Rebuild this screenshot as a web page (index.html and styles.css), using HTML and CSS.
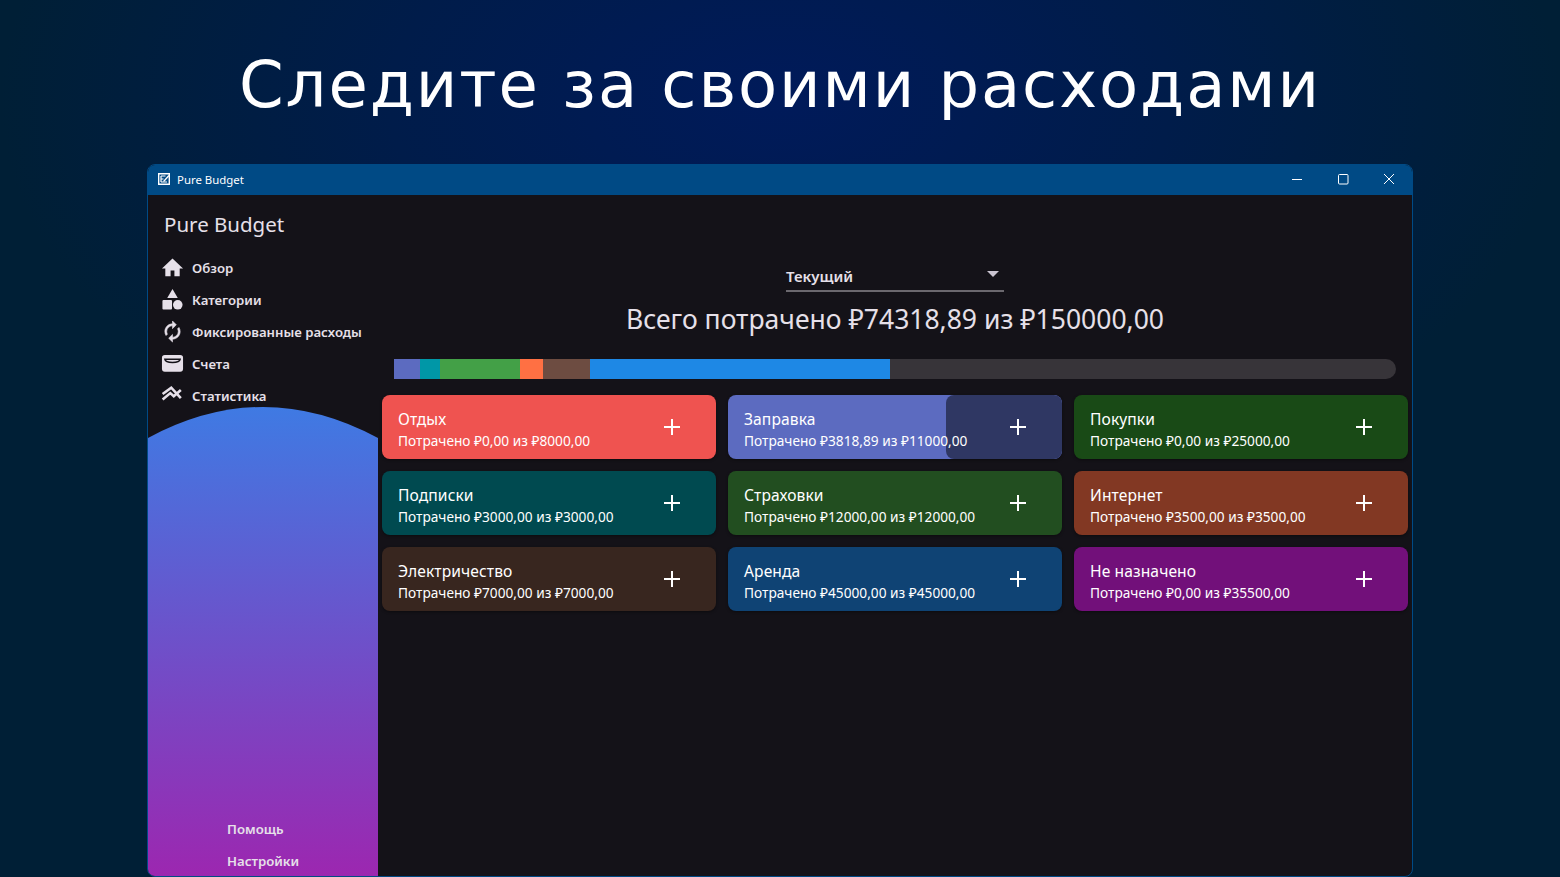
FILE: index.html
```html
<!DOCTYPE html>
<html lang="ru">

<head>
    <meta charset="UTF-8">
    <title>Pure Budget</title>
    <link rel="stylesheet" href="styles.css">
</head>

<body>
    <h1 class="promo-title">Следите за своими расходами</h1>

    <div class="window">
        <div class="titlebar">
            <svg class="app-icon" viewBox="0 0 12 12">
                <path d="M.7.7h10.600v10.600H.7z" fill="none" stroke="#fff" stroke-width="1.400" />
                <path d="M3 3h4.500M3 6h2.500M3 9h6M3 3v6" fill="none" stroke="#fff" stroke-width="1.200" />
                <path d="M5.500 7.500l5-5.500 1 1-5 5.500-1.300.3z" fill="#fff" />
            </svg>
            <span class="app-name">Pure Budget</span>
            <div class="win-controls">
                <svg class="win-btn" viewBox="0 0 46 30">
                    <path d="M18 15.500h10" stroke="#fff" fill="none" />
                </svg>
                <svg class="win-btn" viewBox="0 0 46 30">
                    <rect x="18.500" y="10.500" width="9.500" height="9.500" rx="1" stroke="#fff" fill="none" />
                </svg>
                <svg class="win-btn" viewBox="0 0 46 30">
                    <path d="M18 10l10 10M28 10l-10 10" stroke="#fff" fill="none" />
                </svg>
            </div>
        </div>

        <div class="app-body">
            <aside class="sidebar">
                <div class="brand">Pure Budget</div>
                <nav class="nav">
                    <a class="nav-item">
                        <svg class="nav-icon" viewBox="0 0 24 24">
                            <path d="M10 21v-6h4v6h5.500v-8H23L12 2.500 1 13h3.500v8z" />
                        </svg>
                        <span class="nav-label">Обзор</span>
                    </a>
                    <a class="nav-item">
                        <svg class="nav-icon" viewBox="0 0 24 24">
                            <path d="M12 1l5.500 9.500h-11z" />
                            <rect x="1.500" y="12.500" width="10" height="10" rx="1" />
                            <circle cx="17.500" cy="17.500" r="5" />
                        </svg>
                        <span class="nav-label">Категории</span>
                    </a>
                    <a class="nav-item">
                        <svg class="nav-icon nav-icon-sync" viewBox="0 0 24 24">
                            <path d="M12 6v3l4-4-4-4v3c-4.420 0-8 3.580-8 8 0 1.570.46 3.030 1.240 4.260L6.700 14.800c-.45-.83-.7-1.790-.7-2.800 0-3.310 2.690-6 6-6zm6.760 1.740L17.300 9.200c.44.84.7 1.790.7 2.800 0 3.310-2.690 6-6 6v-3l-4 4 4 4v-3c4.420 0 8-3.580 8-8 0-1.570-.46-3.030-1.240-4.260z" />
                        </svg>
                        <span class="nav-label">Фиксированные расходы</span>
                    </a>
                    <a class="nav-item">
                        <svg class="nav-icon" viewBox="0 0 24 24">
                            <rect x="1" y="3" width="22" height="17.500" rx="3" />
                            <path class="tray-line" d="M4 7.500h16c-.5 3-3.500 3.500-8 3.500s-7.500-.5-8-3.500z" />
                        </svg>
                        <span class="nav-label">Счета</span>
                    </a>
                    <a class="nav-item">
                        <svg class="nav-icon nav-icon-line" viewBox="0 0 24 24">
                            <path d="M1.700 10.500l9-6.700 10 11" />
                            <path d="M1.700 16.200l8-6.700 3.600 3.300 7.400-6.600" />
                        </svg>
                        <span class="nav-label">Статистика</span>
                    </a>
                </nav>
                <div class="wave">
                    <a class="wave-link"><span class="nav-label">Помощь</span></a>
                    <a class="wave-link"><span class="nav-label">Настройки</span></a>
                </div>
            </aside>

            <main class="content">
                <div class="period-select">
                    <span>Текущий</span>
                    <span class="caret"></span>
                </div>
                <div class="total">Всего потрачено ₽74318,89 из ₽150000,00</div>

                <div class="total-bar">
                    <div class="seg seg-indigo" style="width: 2.55%"></div>
                    <div class="seg seg-teal" style="width: 2%"></div>
                    <div class="seg seg-green" style="width: 8%"></div>
                    <div class="seg seg-orange" style="width: 2.33%"></div>
                    <div class="seg seg-brown" style="width: 4.67%"></div>
                    <div class="seg seg-blue" style="width: 30%"></div>
                </div>

                <div class="cards">
                    <div class="card card-rest">
                        <div class="card-text">
                            <div class="card-name">Отдых</div>
                            <div class="card-sum">Потрачено ₽0,00 из ₽8000,00</div>
                        </div>
                        <svg class="card-add" viewBox="0 0 24 24"><path d="M4 12h16M12 4v16" /></svg>
                    </div>
                    <div class="card card-fuel">
                        <div class="card-left" style="width: 34.7%"></div>
                        <div class="card-text">
                            <div class="card-name">Заправка</div>
                            <div class="card-sum">Потрачено ₽3818,89 из ₽11000,00</div>
                        </div>
                        <svg class="card-add" viewBox="0 0 24 24"><path d="M4 12h16M12 4v16" /></svg>
                    </div>
                    <div class="card card-shop">
                        <div class="card-text">
                            <div class="card-name">Покупки</div>
                            <div class="card-sum">Потрачено ₽0,00 из ₽25000,00</div>
                        </div>
                        <svg class="card-add" viewBox="0 0 24 24"><path d="M4 12h16M12 4v16" /></svg>
                    </div>
                    <div class="card card-subs">
                        <div class="card-text">
                            <div class="card-name">Подписки</div>
                            <div class="card-sum">Потрачено ₽3000,00 из ₽3000,00</div>
                        </div>
                        <svg class="card-add" viewBox="0 0 24 24"><path d="M4 12h16M12 4v16" /></svg>
                    </div>
                    <div class="card card-insurance">
                        <div class="card-text">
                            <div class="card-name">Страховки</div>
                            <div class="card-sum">Потрачено ₽12000,00 из ₽12000,00</div>
                        </div>
                        <svg class="card-add" viewBox="0 0 24 24"><path d="M4 12h16M12 4v16" /></svg>
                    </div>
                    <div class="card card-net">
                        <div class="card-text">
                            <div class="card-name">Интернет</div>
                            <div class="card-sum">Потрачено ₽3500,00 из ₽3500,00</div>
                        </div>
                        <svg class="card-add" viewBox="0 0 24 24"><path d="M4 12h16M12 4v16" /></svg>
                    </div>
                    <div class="card card-power">
                        <div class="card-text">
                            <div class="card-name">Электричество</div>
                            <div class="card-sum">Потрачено ₽7000,00 из ₽7000,00</div>
                        </div>
                        <svg class="card-add" viewBox="0 0 24 24"><path d="M4 12h16M12 4v16" /></svg>
                    </div>
                    <div class="card card-rent">
                        <div class="card-text">
                            <div class="card-name">Аренда</div>
                            <div class="card-sum">Потрачено ₽45000,00 из ₽45000,00</div>
                        </div>
                        <svg class="card-add" viewBox="0 0 24 24"><path d="M4 12h16M12 4v16" /></svg>
                    </div>
                    <div class="card card-none">
                        <div class="card-text">
                            <div class="card-name">Не назначено</div>
                            <div class="card-sum">Потрачено ₽0,00 из ₽35500,00</div>
                        </div>
                        <svg class="card-add" viewBox="0 0 24 24"><path d="M4 12h16M12 4v16" /></svg>
                    </div>
                </div>
            </main>
        </div>
    </div>
</body>

</html>
```

FILE: styles.css
```css
* {
    margin: 0;
    padding: 0;
    box-sizing: border-box;
}

:root {
    --app-bg: #141218;
    --title-blue: #004a85;
    --text-soft: #e6e0e9;
}

html,
body {
    height: 877px;
    overflow: hidden;
}

body {
    font-family: "Noto Sans", sans-serif;
    background: radial-gradient(ellipse 780px 440px at 50% 100px, #001a5a 0%, #001c4a 50%, #001f36 100%);
    color: #fff;
}

.promo-title {
    height: 164px;
    padding-top: 45px;
    text-align: center;
    font-family: "DejaVu Sans", sans-serif;
    font-size: 64px;
    line-height: 80px;
    font-weight: 400;
    letter-spacing: 1.9px;
}

.window {
    margin: 0 147px;
    height: 713px;
    background-color: var(--app-bg);
    border: 1px solid var(--title-blue);
    border-radius: 8px;
    overflow: hidden;
    display: flex;
    flex-direction: column;
}

.titlebar {
    height: 30px;
    flex-shrink: 0;
    background-color: var(--title-blue);
    display: flex;
    align-items: center;
    padding: 0 0 2px 10px;
    font-size: 11.4px;
}

.app-icon {
    width: 12px;
    height: 12px;
    margin-right: 7px;
}

.win-controls {
    margin-left: auto;
    display: flex;
}

.win-btn {
    width: 46px;
    height: 30px;
}

.app-body {
    flex: 1;
    display: flex;
    min-height: 0;
}

.sidebar {
    width: 230px;
    flex-shrink: 0;
    display: flex;
    flex-direction: column;
}

.brand {
    padding: 13px 0 0 16px;
    height: 56px;
    font-size: 20.5px;
    line-height: 32px;
    color: var(--text-soft);
}

.nav {
    display: flex;
    flex-direction: column;
}

.nav-item {
    height: 32px;
    display: flex;
    align-items: center;
    padding-left: 13px;
    font-size: 13.2px;
    font-weight: 600;
    color: var(--text-soft);
}

.nav-label {
    margin-top: 2px;
}

.nav-icon {
    width: 23px;
    height: 23px;
    margin-right: 8px;
    fill: var(--text-soft);
}

.nav-icon-sync {
    stroke: var(--text-soft);
    stroke-width: 0.6;
}

.nav-icon-line {
    fill: none;
    stroke: var(--text-soft);
    stroke-width: 2.7;
}

.tray-line {
    fill: none;
    stroke: var(--app-bg);
    stroke-width: 1.6;
}

.wave {
    flex: 1;
    margin-top: -4px;
    background: linear-gradient(180deg, #3f7ae3 0%, #9c27b0 100%);
    clip-path: path("M0 31 Q115 -31 230 31 V480 H0 Z");
    display: flex;
    flex-direction: column;
    justify-content: flex-end;
    align-items: flex-start;
    padding-left: 79px;
}

.wave-link {
    height: 32px;
    display: flex;
    align-items: center;
    font-size: 13.2px;
    font-weight: 600;
    color: var(--text-soft);
}

.content {
    flex: 1;
    min-width: 0;
    padding: 66px 4px 0;
    display: flex;
    flex-direction: column;
}

.period-select {
    align-self: center;
    width: 218px;
    height: 31px;
    display: flex;
    align-items: center;
    justify-content: space-between;
    border-bottom: 2px solid #6b686e;
    font-size: 15px;
    font-weight: 600;
    color: var(--text-soft);
}

.caret {
    width: 0;
    height: 0;
    margin-right: 5px;
    margin-top: -3px;
    border-left: 6px solid transparent;
    border-right: 6px solid transparent;
    border-top: 6px solid #cac4d0;
}

.total {
    height: 39px;
    margin-top: 8px;
    text-align: center;
    font-size: 26.5px;
    line-height: 38px;
    color: var(--text-soft);
}

.total-bar {
    height: 20px;
    margin: 20px 12px 16px;
    background-color: #373439;
    border-radius: 10px;
    display: flex;
}

.seg-indigo { background-color: #5c6bc0; }
.seg-teal { background-color: #0097a7; }
.seg-green { background-color: #43a047; }
.seg-orange { background-color: #ff7043; }
.seg-brown { background-color: #6d4c41; }
.seg-blue { background-color: #1e88e5; }

.cards {
    display: grid;
    grid-template-columns: repeat(3, 1fr);
    gap: 12px;
}

.card {
    position: relative;
    height: 64px;
    border-radius: 8px;
    overflow: hidden;
    display: flex;
    align-items: center;
    justify-content: space-between;
    padding: 0 32px 0 16px;
    box-shadow: 0 1px 3px rgba(0, 0, 0, 0.4);
}

.card-left {
    position: absolute;
    top: 0;
    right: 0;
    bottom: 0;
    background-color: #2f3763;
    border-radius: 8px;
}

.card-text {
    position: relative;
    padding-top: 5px;
}

.card-name {
    font-size: 15.6px;
    line-height: 22px;
    letter-spacing: 0.1px;
}

.card-sum {
    margin-top: 1px;
    font-size: 13.7px;
    line-height: 20px;
}

.card-add {
    position: relative;
    width: 24px;
    height: 24px;
    fill: none;
    stroke: #fff;
    stroke-width: 2;
}

.card-rest { background-color: #ef5350; }
.card-fuel { background-color: #5c6bc0; }
.card-shop { background-color: #194a16; }
.card-subs { background-color: #004a50; }
.card-insurance { background-color: #224e20; }
.card-net { background-color: #823823; }
.card-power { background-color: #38261f; }
.card-rent { background-color: #0f4374; }
.card-none { background-color: #72107a; }
```
